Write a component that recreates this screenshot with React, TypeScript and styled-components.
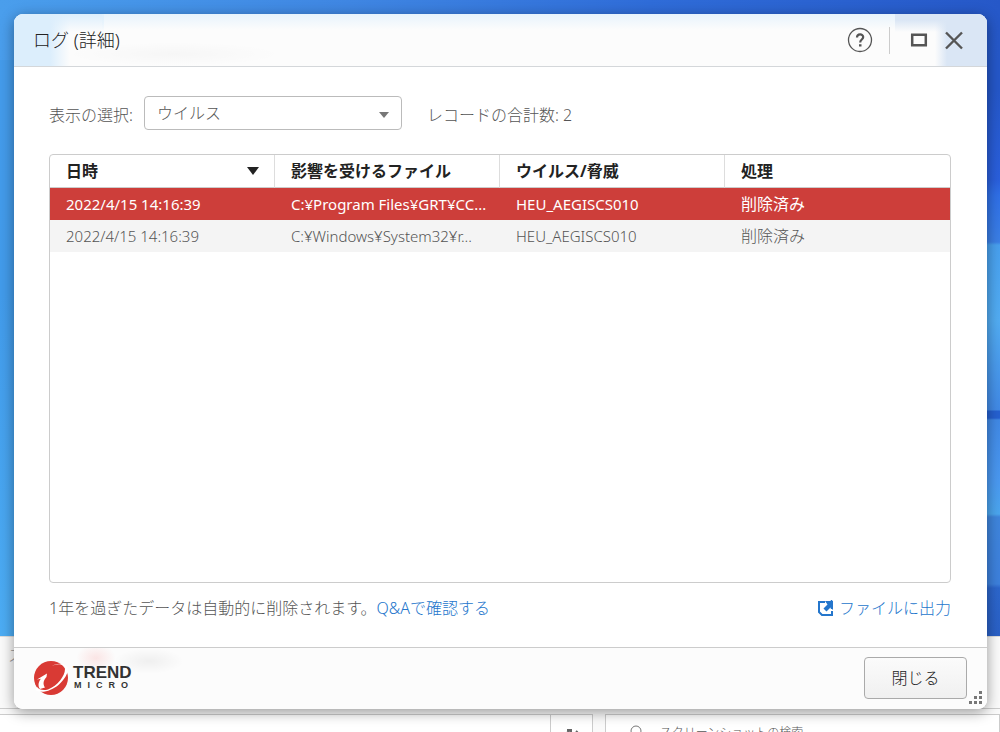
import React from "react";
import styled, { createGlobalStyle, css } from "styled-components";

const GlobalStyle = createGlobalStyle`
  *, *::before, *::after { box-sizing: border-box; }
  body {
    margin: 0;
    font-family: "Noto Sans", "Noto Sans CJK JP", sans-serif;
    font-size: 16px;
    font-weight: 300;
    line-height: 24px;
    color: #555;
  }
  button, select { font: inherit; }
`;

const Desktop = styled.div`
  position: relative;
  display: flex;
  min-height: 100vh;
  padding: 14px 13px 23px 14px;
  overflow: hidden;
  background: #3f8ce8;
`;

const Wallpaper = styled.div`
  position: absolute;
  inset: 0;
  background:
    linear-gradient(90deg, #4a9eec 0%, #3f86e2 35%, #2f6cd8 65%, #2658c8 100%) top / 100% 60px no-repeat,
    linear-gradient(180deg, #459bea 0%, #429bea 40%, #4fb1f6 100%) left / 50% 100% no-repeat,
    linear-gradient(180deg, #2557c8 0 90px, #2a5fdc 180px, #2f6fe6 195px, #3b7fe5 242px, #48a0ee 245px, #52acf2 320px, #4189e5 410px, #2560d0 411px 418px, #4189e5 420px, #4a98f0 480px, #4ba6ee 514px, #3f85dc 517px, #3d80dc 584px, #2c66cc 588px, #2a60c6 636px) right / 50% 100% no-repeat;
`;

const BackWindow = styled.div`
  position: absolute;
  left: 0;
  right: 0;
  bottom: 0;
  height: 96px;
  display: flex;
  flex-direction: column;
  overflow: hidden;
  background: #fafafa;
  border-top: 1px solid #ddd;
`;

const BackMenu = styled.div`
  flex: none;
  height: 72px;
  padding: 6px 8px;
  border-bottom: 1px solid #ccc;
  color: #999;
`;

const BackBar = styled.div`
  flex: none;
  display: grid;
  grid-template-columns: 3fr 2fr;
  gap: 12px;
  padding-top: 5px;
  color: #555;
`;

const BackField = styled.div`
  display: flex;
  gap: 16px;
  height: 34px;
  padding: 6px 0 0 20px;
  border: 1px solid #ccc;
  background: #fff;
  font-size: 12px;
  white-space: nowrap;
`;

const BackPath = styled.div`
  display: flex;
  height: 34px;
  border: 1px solid #ccc;
  border-left: 0;
  background: #fff;
`;

const BackCrumb = styled.div`
  flex: 1;
  padding: 12px 8px;
`;

const BackRefresh = styled.div`
  width: 42px;
  padding: 10px 13px;
  border-left: 1px solid #ccc;
`;

const Dialog = styled.main`
  position: relative;
  flex: 1;
  display: flex;
  flex-direction: column;
  border-radius: 9px;
  overflow: hidden;
  background: #fff;
`;

const DialogShadow = styled.div`
  position: relative;
  flex: 1;
  display: flex;
  border-radius: 9px;
  box-shadow: 0 3px 14px rgba(0, 0, 0, 0.4);
`;

const TitleBar = styled.header`
  display: flex;
  align-items: center;
  height: 53px;
  padding: 0 23px 0 19px;
  border-bottom: 1px solid #d4d7da;
  background:
    radial-gradient(ellipse at center, rgba(0, 0, 0, 0.025), transparent 70%) 50px 28px / 220px 24px no-repeat,
    linear-gradient(180deg, rgba(226, 241, 252, 0.8), transparent 16px) 88px 0 / calc(100% - 180px) 100% no-repeat,
    linear-gradient(180deg, #dceefc, rgba(220, 238, 252, 0) 18px) 0 0 / 90px 100% no-repeat,
    linear-gradient(180deg, #dae6f5 6px, rgba(218, 230, 245, 0) 18px) right / 92px 100% no-repeat,
    linear-gradient(90deg, #dceefc 0, #dceefc 36px, #fcfcfc 56px, #fcfcfc calc(100% - 52px), #dae6f5 calc(100% - 40px));
`;

const Title = styled.h1`
  flex: 1;
  margin: 0;
  font-size: 18px;
  font-weight: 300;
  line-height: 28px;
  color: #222;
`;

const IconButton = styled.button`
  display: flex;
  padding: 0;
  border: 0;
  background: none;
  color: #555;
`;

const TitleActions = styled.div`
  display: flex;
  align-items: center;
`;

const Divider = styled.span`
  width: 1px;
  height: 27px;
  margin: 0 20px 0 16px;
  background: #ccc;
`;

const WindowButtons = styled.div`
  display: flex;
  align-items: center;
  gap: 16px;
`;

const Content = styled.section`
  flex: 1;
  display: flex;
  flex-direction: column;
  padding: 29px 36px 27px 35px;
`;

const Filter = styled.div`
  display: flex;
  align-items: center;
  height: 34px;
  margin-bottom: 24px;
`;

const FilterLabel = styled.label`
  width: 95px;
  padding-top: 4px;
  white-space: nowrap;
`;

const SelectBox = styled.div`
  position: relative;
  width: 258px;
  margin-right: 25px;

  svg {
    position: absolute;
    right: 13px;
    top: 16px;
    pointer-events: none;
  }
`;

const Select = styled.select`
  appearance: none;
  display: block;
  width: 100%;
  height: 34px;
  padding: 0 32px 0 12px;
  border: 1px solid #bbb;
  border-radius: 4px;
  background: #fff;
  color: #555;
`;

const Total = styled.span`
  padding-top: 4px;
`;

const TableFrame = styled.div`
  flex: 1;
  border: 1px solid #ccc;
  border-radius: 4px;
  overflow: hidden;
`;

const Table = styled.table`
  width: 100%;
  table-layout: fixed;
  border-collapse: separate;
  border-spacing: 0;
  text-align: left;
`;

const HeadCell = styled.th`
  height: 33px;
  padding: 0 15px 0 16px;
  border-bottom: 1px solid #ccc;
  color: #222;
  font-weight: 700;

  &:not(:last-child) { border-right: 1px solid #ddd; }
`;

const HeadLabel = styled.span`
  display: flex;
  align-items: center;
  justify-content: space-between;
`;

const Row = styled.tr<{ $selected: boolean }>`
  background: #f4f4f4;
  ${(p) => p.$selected && css`
    background: #cd3e3a;
    color: #fff;
    font-weight: 400;
  `}
`;

const Cell = styled.td`
  height: 32px;
  padding: 0 16px 1px;
  overflow: hidden;
  white-space: nowrap;
  font-size: 15px;
`;

const ActionCell = styled(Cell)`
  font-size: 16px;
`;

const Notes = styled.div`
  display: flex;
  justify-content: space-between;
  margin-top: 13px;
`;

const Note = styled.p`
  margin: 0;
`;

const Link = styled.a`
  display: inline-flex;
  align-items: center;
  gap: 5px;
  color: #2476cc;
  text-decoration: none;
`;

const Footer = styled.footer`
  display: flex;
  align-items: center;
  justify-content: space-between;
  height: 62px;
  padding: 0 20px 2px;
  border-top: 1px solid #ccc;
  background:
    radial-gradient(ellipse at center, rgba(240, 60, 60, 0.12), transparent 70%) 62px -4px / 40px 28px no-repeat,
    radial-gradient(ellipse at center, rgba(0, 0, 0, 0.05), transparent 70%) 100px 0 / 70px 26px no-repeat,
    #fcfcfc;
`;

const Brand = styled.div`
  display: flex;
  align-items: center;
  gap: 4px;
`;

const BrandText = styled.div`
  font-family: "Liberation Sans", sans-serif;
  font-weight: 700;
  color: #333;
`;

const BrandName = styled.div`
  font-size: 17px;
  line-height: 14px;
`;

const BrandSub = styled.div`
  padding-left: 1px;
  font-size: 9px;
  line-height: 10px;
  letter-spacing: 6px;
`;

const CloseButton = styled.button`
  width: 103px;
  height: 42px;
  border: 1px solid #aaa;
  border-radius: 4px;
  background: linear-gradient(#fbfbfb, #f0f0f0);
  color: #222;
`;

const Grip = styled.svg`
  position: absolute;
  right: 5px;
  bottom: 5px;
`;

const rows = [
  { date: "2022/4/15 14:16:39", file: "C:¥Program Files¥GRT¥CC...", threat: "HEU_AEGISCS010", action: "削除済み" },
  { date: "2022/4/15 14:16:39", file: "C:¥Windows¥System32¥r...", threat: "HEU_AEGISCS010", action: "削除済み" },
];

function BrandMark() {
  return (
    <svg width="35" height="36" viewBox="0 0 35 36" aria-hidden="true">
      <circle cx="17" cy="18" r="17" fill="#d93a34" />
      <path d="M16 7C21 4 28 3 30.500 6.500C33 13 25 25 14 29.500C9 31 5 29.500 3 27L1 29.500C6 34 17 31.500 25 24.500C33 17 36 9 32 5.500C27 2 20 4 16 7Z" fill="#fff" />
      <path d="M3 19.500L13 13.500L12.500 17C9.500 20 8.500 24 11 27.500L6 29C3.500 26 4.500 21.500 7 18.800Z" fill="#fff" />
    </svg>
  );
}

export default function App() {
  return (
    <>
      <GlobalStyle />
      <Desktop>
        <Wallpaper />
        <BackWindow aria-hidden="true">
          <BackMenu>ス</BackMenu>
          <BackBar>
            <BackPath>
              <BackCrumb>
                <svg width="12" height="12" viewBox="0 0 12 12" fill="none" stroke="#666" strokeWidth="2"><path d="M3 1L8 6L3 11" /></svg>
              </BackCrumb>
              <BackRefresh>
                <svg width="16" height="16" viewBox="0 0 16 16" fill="none" stroke="#666" strokeWidth="2"><path d="M3 3H7V7M7 3A6 6 0 1 0 12 4" /></svg>
              </BackRefresh>
            </BackPath>
            <BackField>
              <svg width="18" height="20" viewBox="0 0 18 20" fill="none" stroke="#777" strokeWidth="1"><circle cx="10" cy="10" r="5" /><path d="M6 14L1 19" /></svg>
              <span>スクリーンショットの検索</span>
            </BackField>
          </BackBar>
        </BackWindow>
        <DialogShadow>
          <Dialog>
            <TitleBar>
              <Title>ログ (詳細)</Title>
              <TitleActions>
                <IconButton aria-label="ヘルプ">
                  <svg width="26" height="26" viewBox="0 0 26 26" fill="none" stroke="currentColor">
                    <circle cx="13" cy="13" r="11.5" strokeWidth="1.3" />
                    <path d="M10 10.500C10 6.500 16.200 6.500 16.200 10C16.200 12.500 13.200 12.500 13.200 15.500" strokeWidth="2.2" />
                    <path d="M12 17.200H14.500V19.500H12Z" fill="currentColor" stroke="none" />
                  </svg>
                </IconButton>
                <Divider />
                <WindowButtons>
                  <IconButton aria-label="最大化">
                    <svg width="18" height="16" viewBox="0 0 18 16" fill="none" stroke="currentColor" strokeWidth="2.5"><path d="M2.2 2.7H15.8V13.3H2.2Z" /></svg>
                  </IconButton>
                  <IconButton aria-label="ウィンドウを閉じる">
                    <svg width="20" height="20" viewBox="0 0 20 20" fill="none" stroke="currentColor" strokeWidth="2.4"><path d="M2 2.5L18 18.5M18 2.5L2 18.5" /></svg>
                  </IconButton>
                </WindowButtons>
              </TitleActions>
            </TitleBar>
            <Content>
              <Filter>
                <FilterLabel htmlFor="log-kind">表示の選択:</FilterLabel>
                <SelectBox>
                  <Select id="log-kind" defaultValue="virus">
                    <option value="virus">ウイルス</option>
                  </Select>
                  <svg width="10" height="6" viewBox="0 0 10 6" aria-hidden="true"><path d="M0 0H10L5 6Z" fill="#777" /></svg>
                </SelectBox>
                <Total>レコードの合計数: 2</Total>
              </Filter>
              <TableFrame>
                <Table>
                  <thead>
                    <tr>
                      <HeadCell aria-sort="descending">
                        <HeadLabel>
                          日時
                          <svg width="12" height="8" viewBox="0 0 12 8" aria-hidden="true"><path d="M0 0H12L6 8Z" fill="#222" /></svg>
                        </HeadLabel>
                      </HeadCell>
                      <HeadCell>影響を受けるファイル</HeadCell>
                      <HeadCell>ウイルス/脅威</HeadCell>
                      <HeadCell>処理</HeadCell>
                    </tr>
                  </thead>
                  <tbody>
                    {rows.map((row, i) => (
                      <Row key={i} $selected={i === 0}>
                        <Cell>{row.date}</Cell>
                        <Cell>{row.file}</Cell>
                        <Cell>{row.threat}</Cell>
                        <ActionCell>{row.action}</ActionCell>
                      </Row>
                    ))}
                  </tbody>
                </Table>
              </TableFrame>
              <Notes>
                <Note>
                  1年を過ぎたデータは自動的に削除されます。<Link href="#qa">Q&Aで確認する</Link>
                </Note>
                <Link href="#export">
                  <svg width="17" height="17" viewBox="0 0 17 17" fill="none" stroke="currentColor" strokeWidth="2" aria-hidden="true">
                    <path d="M8 2H2V12L5 15H15V11" />
                    <path d="M8 1H16V10L13.500 7.500L9.500 11.500L6.500 8.500L10.500 4.500Z" fill="currentColor" stroke="none" />
                    <path d="M14.500 0V9" strokeWidth="1.5" />
                  </svg>
                  ファイルに出力
                </Link>
              </Notes>
            </Content>
            <Footer>
              <Brand>
                <BrandMark />
                <BrandText>
                  <BrandName>TREND</BrandName>
                  <BrandSub>MICRO</BrandSub>
                </BrandText>
              </Brand>
              <CloseButton>閉じる</CloseButton>
            </Footer>
            <Grip width="14" height="14" viewBox="0 0 14 14" fill="#777" aria-hidden="true">
              <path d="M11 1h3v3h-3zM6 6h3v3H6zM11 6h3v3h-3zM1 11h3v3H1zM6 11h3v3H6zM11 11h3v3h-3z" />
            </Grip>
          </Dialog>
        </DialogShadow>
      </Desktop>
    </>
  );
}
